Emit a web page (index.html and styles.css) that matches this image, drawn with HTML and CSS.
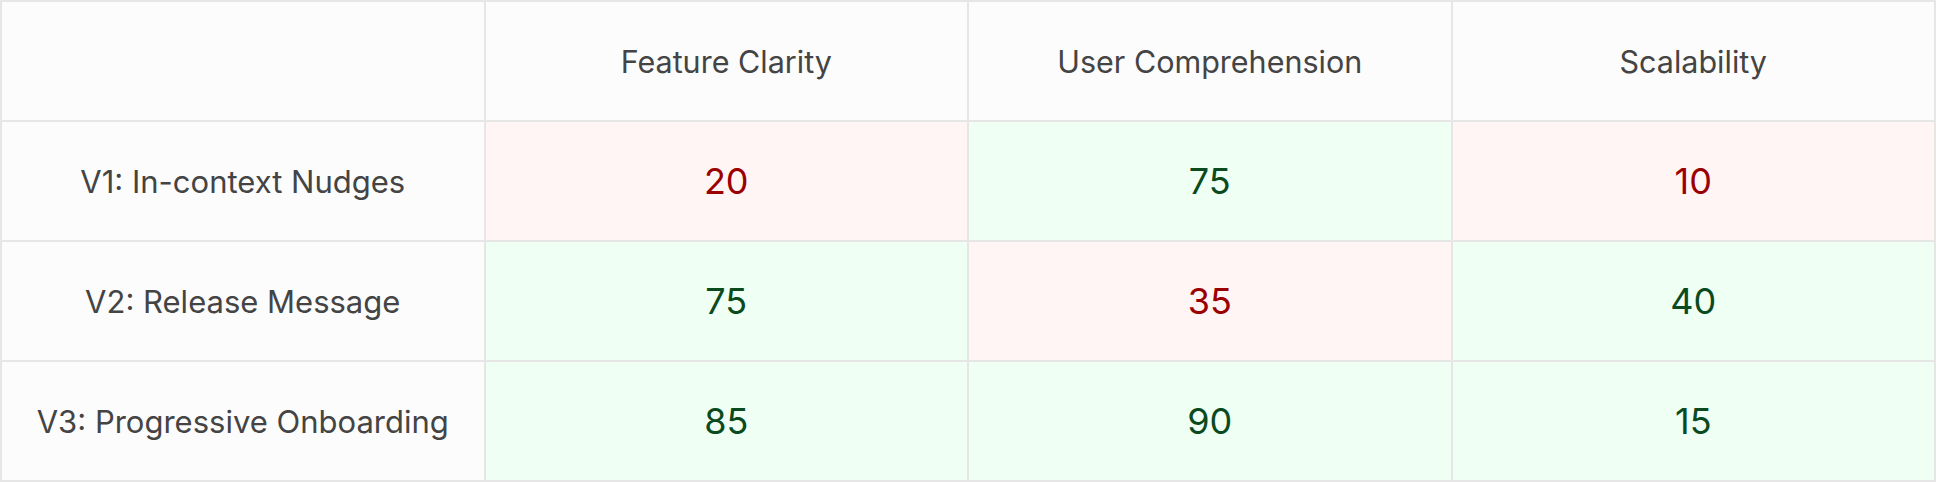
FILE: index.html
```html
<!DOCTYPE html>
<html>
<head>
<meta charset="utf-8">
<link rel="stylesheet" href="styles.css">
</head>
<body>
<div class="matrix">
  <div class="cell label"></div>
  <div class="cell head">Feature Clarity</div>
  <div class="cell head">User Comprehension</div>
  <div class="cell head">Scalability</div>

  <div class="cell label">V1: In-context Nudges</div>
  <div class="cell score low">20</div>
  <div class="cell score high">75</div>
  <div class="cell score low">10</div>

  <div class="cell label">V2: Release Message</div>
  <div class="cell score high">75</div>
  <div class="cell score low">35</div>
  <div class="cell score high">40</div>

  <div class="cell label">V3: Progressive Onboarding</div>
  <div class="cell score high">85</div>
  <div class="cell score high">90</div>
  <div class="cell score high">15</div>
</div>
</body>
</html>
```
FILE: styles.css
```css
html, body {
  margin: 0;
  padding: 0;
  background: #fcfcfc;
}
body {
  font-family: Inter, "Noto Sans", sans-serif;
}
.matrix {
  width: 1936px;
  height: 482px;
  box-sizing: border-box;
  display: grid;
  grid-template-columns: repeat(4, 1fr);
  grid-template-rows: repeat(4, 1fr);
  gap: 2px;
  padding: 2px;
  background: #e6e6e6;
}
.cell {
  display: flex;
  align-items: center;
  justify-content: center;
  background: #fcfcfc;
  color: #444444;
  text-align: center;
}
.head {
  font-size: 30.5px;
}
.label {
  font-size: 31px;
}
.score {
  font-size: 36px;
}
.low {
  background: #fff5f4;
  color: #9a0000;
}
.high {
  background: #effff3;
  color: #0a4a1e;
}
```
